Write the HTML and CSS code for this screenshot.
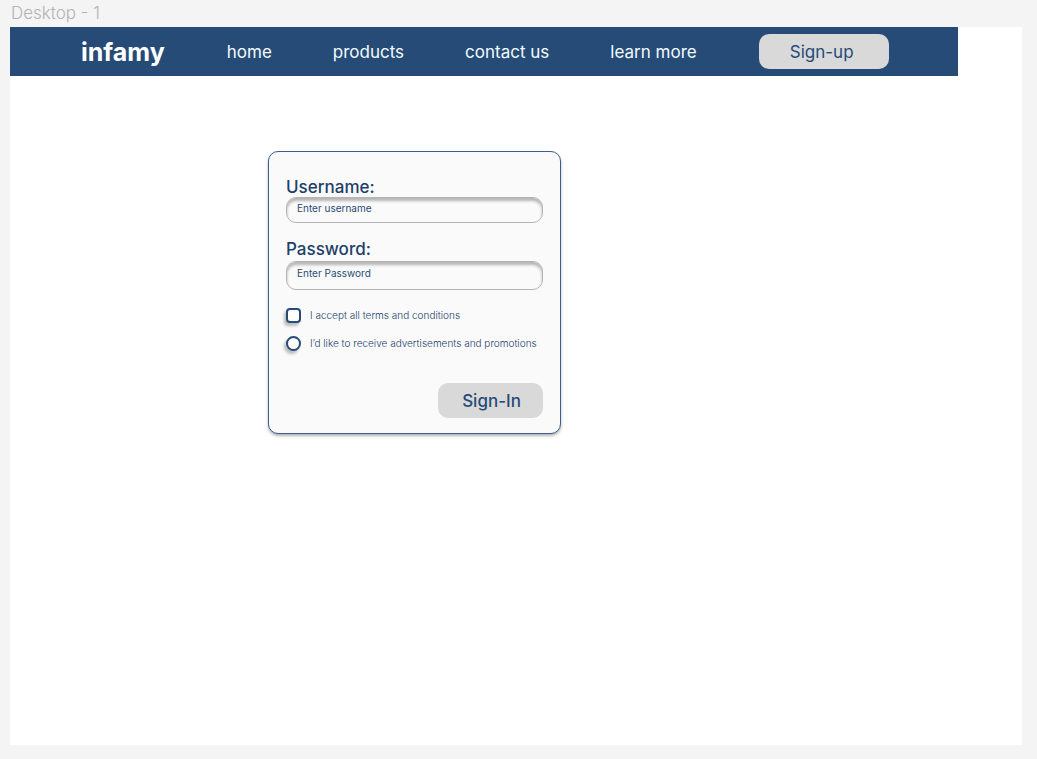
FILE: index.html
```html
<!DOCTYPE html>
<html lang="en">
<head>
<meta charset="utf-8">
<meta name="viewport" content="width=device-width, initial-scale=1">
<title>infamy</title>
<link rel="stylesheet" href="styles.css">
</head>
<body>
<div class="frame-label">Desktop - 1</div>
<div class="frame">
  <header class="navbar">
    <a class="brand" href="#">infamy</a>
    <nav class="nav-links">
      <a href="#">home</a>
      <a href="#">products</a>
      <a href="#">contact us</a>
      <a href="#">learn more</a>
    </nav>
    <button class="button signup" type="button">Sign-up</button>
  </header>
  <main class="content">
    <form class="card">
      <label class="field-label" for="username">Username:</label>
      <input class="field" id="username" type="text" placeholder="Enter username">
      <label class="field-label second" for="password">Password:</label>
      <input class="field tall" id="password" type="password" placeholder="Enter Password">
      <div class="options">
        <label class="option"><input class="mark" type="checkbox">I accept all terms and conditions</label>
        <label class="option"><input class="mark round" type="radio">I’d like to receive advertisements and promotions</label>
      </div>
      <button class="button signin" type="button">Sign-In</button>
    </form>
  </main>
</div>
</body>
</html>
```
FILE: styles.css
```css
* {
  box-sizing: border-box;
}

body {
  display: flex;
  flex-direction: column;
  min-height: 100vh;
  margin: 0;
  padding: 0 15px 14px 10px;
  background: #f4f4f4;
  color: #264b77;
  font-family: Inter, "Liberation Sans", sans-serif;
}

.frame-label {
  padding: 0 0 0 1px;
  color: #b3b3b3;
  font-size: 17px;
  font-weight: 300;
  line-height: 27px;
}

.frame {
  flex: 1;
  background: #fff;
}

.navbar {
  display: flex;
  align-items: center;
  gap: 62px;
  min-height: 49px;
  margin-right: 64px;
  padding: 0 70px 0 71px;
  background: #264b77;
}

.navbar a {
  color: #f3fbff;
  text-decoration: none;
  white-space: nowrap;
}

.navbar .brand {
  color: #fff;
  font-size: 25px;
  font-weight: 700;
}

.nav-links {
  display: flex;
  gap: 61px;
  font-size: 17px;
}

.button {
  height: 35px;
  padding: 0;
  border: 0;
  border-radius: 10px;
  background: #d9d9d9;
  color: #264b77;
  font-family: inherit;
  font-size: 17px;
  font-weight: 500;
}

.signup {
  flex: none;
  width: 130px;
  margin-left: auto;
  padding-right: 4px;
  font-weight: 400;
}

.content {
  padding: 75px 16px 16px 258px;
}

.card {
  display: flex;
  flex-direction: column;
  max-width: 293px;
  padding: 25px 17px 15px;
  border: 1px solid #3c5f8c;
  border-radius: 10px;
  background: #fafafa;
  box-shadow: 0 2px 3px rgba(0, 0, 0, 0.3);
}

.field-label {
  color: #213f68;
  font-size: 17px;
  font-weight: 500;
  line-height: 20px;
}

.second {
  margin-top: 16px;
  margin-bottom: 2px;
}

.field {
  width: 100%;
  height: 26px;
  padding: 0 10px 4px;
  border: 1px solid #b4b4b4;
  border-radius: 10px;
  background: #fafafa;
  box-shadow: inset 0 3px 3px rgba(0, 0, 0, 0.28);
  color: #264b77;
  font-family: inherit;
  font-size: 10px;
}

.tall {
  height: 29px;
  padding-bottom: 5px;
}

.field::placeholder {
  color: #264b77;
  opacity: 1;
}

.options {
  display: grid;
  gap: 12px;
  margin-top: 17px;
}

.option {
  display: flex;
  align-items: center;
  gap: 9px;
  color: #1b3f6b;
  font-size: 10px;
  font-weight: 300;
  line-height: 16px;
  white-space: nowrap;
}

.mark {
  appearance: none;
  width: 15px;
  height: 15px;
  margin: 0;
  border: 2px solid #264b77;
  border-radius: 4px;
  background: #fff;
  box-shadow: -2px 3px 3px rgba(0, 0, 0, 0.25);
}

.round {
  border-radius: 50%;
}

.mark:checked {
  background: #264b77;
}

.signin {
  align-self: flex-end;
  width: 105px;
  margin-top: 32px;
  padding-left: 2px;
}
```
